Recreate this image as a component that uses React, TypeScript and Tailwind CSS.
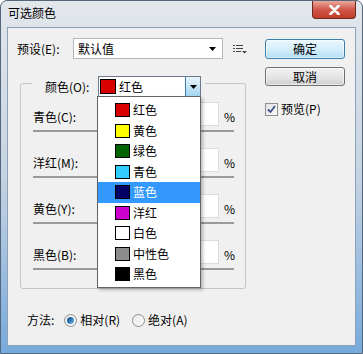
import React from "react";

const swatches = [
  { name: "红色", color: "#d80000" },
  { name: "黄色", color: "#ffff00" },
  { name: "绿色", color: "#006400" },
  { name: "青色", color: "#33ccff" },
  { name: "蓝色", color: "#000066" },
  { name: "洋红", color: "#cc00cc" },
  { name: "白色", color: "#ffffff" },
  { name: "中性色", color: "#8c8c8c" },
  { name: "黑色", color: "#000000" },
];

const sliders = ["青色(C):", "洋红(M):", "黄色(Y):", "黑色(B):"];

function DownTriangle() {
  return (
    <svg width="7" height="4" viewBox="0 0 7 4">
      <path d="M0 0h7L3.5 4z" fill="#000" />
    </svg>
  );
}

function MenuIcon() {
  return (
    <svg width="14" height="10" viewBox="0 0 14 10">
      <g fill="#444">
        <rect x="0" y="1" width="2" height="1" />
        <rect x="3" y="1" width="7" height="1" />
        <rect x="0" y="4" width="2" height="1" />
        <rect x="3" y="4" width="7" height="1" />
        <rect x="0" y="7" width="2" height="1" />
        <rect x="3" y="7" width="5" height="1" />
        <path d="M9 7h5l-2.5 2.5z" />
      </g>
    </svg>
  );
}

function Radio({ checked }: { checked?: boolean }) {
  return (
    <span className="w-[13px] h-[13px] rounded-full border border-[#8e8f8f] bg-gradient-to-br from-[#ebebeb] to-[#f8f8f8] flex items-center justify-center">
      {checked && (
        <span className="w-[7px] h-[7px] rounded-full bg-gradient-to-br from-[#1b4f7e] via-[#2f77b4] to-[#7ec3f0]" />
      )}
    </span>
  );
}

function Checkbox() {
  return (
    <span className="w-[13px] h-[13px] border border-[#8e8f8f] bg-gradient-to-br from-[#e0e0e0] to-[#fbfbfb] flex items-center justify-center">
      <svg width="9" height="9" viewBox="0 0 9 9">
        <path d="M1 4.5l2.5 2.5L8 1" fill="none" stroke="#3b4f8c" strokeWidth="1.8" />
      </svg>
    </span>
  );
}

export default function App() {
  return (
    <div
      className="w-[363px] h-[354px] flex flex-col rounded-t-[7px] border border-[#55657a] bg-gradient-to-b from-[#e3e7ec] via-[#c5d3e2] to-[#76aadc] text-[12px] text-black"
      style={{ fontFamily: '"Noto Sans CJK SC", "Noto Sans", sans-serif' }}
    >
      {/* title bar */}
      <div className="h-[26px] flex items-start justify-between pl-[7px] pr-[6px]">
        <span className="mt-[5px] leading-[14px]">可选颜色</span>
        <div className="w-[44px] h-[18px] rounded-b-[4px] border border-t-0 border-[#6b2a21] bg-gradient-to-b from-[#e9a99c] via-[#d0574a] to-[#c23c25] flex items-center justify-center">
          <svg width="11" height="10" viewBox="0 0 11 10">
            <path d="M1.5 1l8 8M9.5 1l-8 8" stroke="#fff" strokeWidth="2.6" strokeLinecap="round" />
          </svg>
        </div>
      </div>

      {/* client area */}
      <div className="mx-[6px] mb-[7px] flex-1 bg-[#f0f0f0] border border-[#8da2b8] flex pl-[9px] pt-[10px]">
        {/* left column */}
        <div className="w-[230px] flex flex-col">
          <div className="h-[21px] flex items-center">
            <span className="w-[56px] leading-[14px]">预设(E):</span>
            <div className="w-[150px] h-[21px] bg-white border border-[#b5b8bd] flex items-center pl-[4px] pr-[6px]">
              <span className="flex-1 leading-[14px]">默认值</span>
              <DownTriangle />
            </div>
            <span className="ml-[10px] flex items-center">
              <MenuIcon />
            </span>
          </div>

          {/* group */}
          <div className="mt-[24px] ml-[3px] w-[226px] h-[206px] border border-[#c3c6c9] rounded-[3px] flex flex-col">
            <div className="-mt-[8px] ml-[11px] self-start h-[21px] bg-[#f0f0f0] pl-[13px] pr-[4px] flex items-center relative z-10">
              <span className="w-[53px] leading-[14px]">颜色(O):</span>
              <div className="relative w-[103px] h-[21px]">
                <div className="w-full h-full bg-white border border-[#6e7a86] flex items-center pl-[1px]">
                  <span className="w-[16px] h-[15px] border border-black" style={{ backgroundColor: "#d80000" }} />
                  <span className="ml-[3px] flex-1 leading-[14px]">红色</span>
                  <span className="w-[15px] h-[19px] border-l border-[#3c7fb1] bg-gradient-to-b from-[#e6f5fd] via-[#c7e6f7] to-[#a3d5f2] flex items-center justify-center">
                    <DownTriangle />
                  </span>
                </div>
                {/* dropdown list */}
                <div className="absolute left-[-1px] top-[20px] w-[104px] h-[192px] bg-white border border-[#646464] pt-[3px] shadow-[2px_2px_3px_rgba(0,0,0,0.25)]">
                  {swatches.map((s) => {
                    const sel = s.name === "蓝色";
                    return (
                      <div
                        key={s.name}
                        className={
                          "h-[20.5px] flex items-center pl-[17px] " +
                          (sel ? "bg-[#3399ff] text-white" : "")
                        }
                      >
                        <span
                          className="w-[15px] h-[14px] border border-black"
                          style={{ backgroundColor: s.color }}
                        />
                        <span className="ml-[3px] leading-[14px]">{s.name}</span>
                      </div>
                    );
                  })}
                </div>
              </div>
            </div>

            <div className="mt-[5px] pl-[12px] pr-[11px] flex flex-col">
              {sliders.map((label, i) => (
                <div key={label} className={i === 0 ? "" : "mt-[16px]"}>
                  <div className="h-[24px] flex items-center">
                    <span className="flex-1 pt-[5px] leading-[14px]">{label}</span>
                    <span className="w-[60px] h-[24px] bg-white border border-[#dcdcdc]" />
                    <span className="ml-[5px] w-[10px] pt-[5px] leading-[14px]">%</span>
                  </div>
                  <div className="mt-[4px] h-[2px] bg-[#9a9a9a]" />
                </div>
              ))}
            </div>
          </div>

          {/* method */}
          <div className="mt-[24px] pl-[10px] h-[14px] flex items-center">
            <span className="leading-[14px]">方法:</span>
            <span className="ml-[10px]">
              <Radio checked />
            </span>
            <span className="ml-[3px] leading-[14px]">相对(R)</span>
            <span className="ml-[12px]">
              <Radio />
            </span>
            <span className="ml-[3px] leading-[14px]">绝对(A)</span>
          </div>
        </div>

        {/* right column */}
        <div className="ml-[18px] w-[80px] flex flex-col">
          <button className="mt-[1px] h-[20px] rounded-[3px] border border-[#3c7fb1] bg-gradient-to-b from-[#eaf6fd] via-[#d5eefb] to-[#b3def5] leading-[14px] shadow-[inset_0_0_0_1px_#ffffff80]">
            确定
          </button>
          <button className="mt-[8px] h-[19px] rounded-[3px] border border-[#707070] bg-gradient-to-b from-[#f2f2f2] via-[#e6e6e6] to-[#cfcfcf] leading-[14px] shadow-[inset_0_0_0_1px_#ffffff90]">
            取消
          </button>
          <div className="mt-[16px] flex items-center">
            <Checkbox />
            <span className="ml-[3px] leading-[14px]">预览(P)</span>
          </div>
        </div>
      </div>
    </div>
  );
}
